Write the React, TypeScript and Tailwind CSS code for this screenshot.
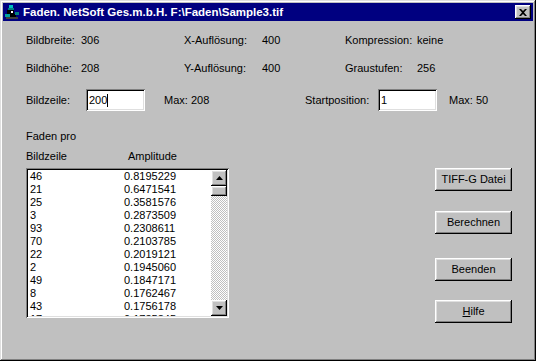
import React from "react";

const raised =
  "shadow-[inset_-1px_-1px_#000,inset_1px_1px_#fff,inset_-2px_-2px_#808080,inset_2px_2px_#dfdfdf]";
const sunken =
  "shadow-[inset_1px_1px_#808080,inset_-1px_-1px_#fff,inset_2px_2px_#000,inset_-2px_-2px_#dfdfdf]";

const rows: [string, string][] = [
  ["46", "0.8195229"],
  ["21", "0.6471541"],
  ["25", "0.3581576"],
  ["3", "0.2873509"],
  ["93", "0.2308611"],
  ["70", "0.2103785"],
  ["22", "0.2019121"],
  ["2", "0.1945060"],
  ["49", "0.1847171"],
  ["8", "0.1762467"],
  ["43", "0.1756178"],
  ["17", "0.1735845"],
];

function Btn({ children, className = "" }: { children: React.ReactNode; className?: string }) {
  return (
    <div
      className={`w-[77px] h-[23px] bg-[#c0c0c0] flex items-center justify-center ${raised} ${className}`}
    >
      {children}
    </div>
  );
}

function TitleIcon() {
  return (
    <svg width="16" height="16" viewBox="0 0 16 16" className="shrink-0">
      <rect x="5" y="1" width="4" height="3" fill="#00c0c0" />
      <rect x="4" y="4" width="6" height="2" fill="#008080" />
      <rect x="3" y="6" width="7" height="4" fill="#000" />
      <rect x="1" y="10" width="5" height="3" fill="#00a0a0" />
      <rect x="6" y="10" width="6" height="4" fill="#000" />
      <rect x="11" y="8" width="4" height="3" fill="#008080" />
      <rect x="2" y="13" width="12" height="2" fill="#404040" />
      <rect x="7" y="7" width="2" height="2" fill="#fff" />
    </svg>
  );
}

export default function App() {
  return (
    <div
      className={`w-[536px] h-[361px] bg-[#c0c0c0] p-[3px] flex flex-col text-[11px] leading-[13px] text-black font-['Liberation_Sans',Arial,sans-serif] shadow-[inset_-1px_-1px_#000,inset_1px_1px_#dfdfdf,inset_-2px_-2px_#808080,inset_2px_2px_#fff]`}
    >
      {/* Title bar */}
      <div className="h-[18px] bg-[#000080] flex items-center pl-[1px] pr-[2px] shrink-0">
        <TitleIcon />
        <span className="ml-[3px] text-white font-bold text-[11.5px] whitespace-nowrap">
          Faden. NetSoft Ges.m.b.H. F:\Faden\Sample3.tif
        </span>
        <div
          className={`ml-auto w-[16px] h-[14px] bg-[#c0c0c0] flex items-center justify-center ${raised}`}
        >
          <svg width="8" height="7" viewBox="0 0 8 7">
            <path d="M0 0h2l2 2 2-2h2L5 3.5 8 7H6L4 5 2 7H0l3-3.5z" fill="#000" />
          </svg>
        </div>
      </div>

      {/* Client */}
      <div className="flex flex-col pl-[23px]">
        <div className="flex mt-[13px] h-[13px] whitespace-nowrap">
          <span className="w-[55px]">Bildbreite:</span>
          <span className="w-[103px]">306</span>
          <span className="w-[78px]">X-Auflösung:</span>
          <span className="w-[83px]">400</span>
          <span className="w-[72px]">Kompression:</span>
          <span>keine</span>
        </div>
        <div className="flex mt-[15px] h-[13px] whitespace-nowrap">
          <span className="w-[55px]">Bildhöhe:</span>
          <span className="w-[103px]">208</span>
          <span className="w-[78px]">Y-Auflösung:</span>
          <span className="w-[83px]">400</span>
          <span className="w-[72px]">Graustufen:</span>
          <span>256</span>
        </div>
        <div className="flex items-center mt-[14px] h-[22px] whitespace-nowrap">
          <span className="w-[60px]">Bildzeile:</span>
          <div className={`w-[59px] h-[22px] bg-white flex items-center pl-[3px] ${sunken}`}>
            <span>200</span>
            <span className="w-[1px] h-[13px] bg-black" />
          </div>
          <span className="ml-[19px] w-[141px]">Max: 208</span>
          <span className="w-[73px]">Startposition:</span>
          <div className={`w-[59px] h-[22px] bg-white flex items-center pl-[3px] ${sunken}`}>
            <span>1</span>
          </div>
          <span className="ml-[12px]">Max: 50</span>
        </div>

        {/* Lower area */}
        <div className="flex mt-[19px]">
          <div className="flex flex-col w-[203px]">
            <span className="h-[13px]">Faden pro</span>
            <div className="flex mt-[7px] h-[13px]">
              <span className="w-[102px]">Bildzeile</span>
              <span>Amplitude</span>
            </div>
            <div className={`mt-[5px] h-[150px] bg-white p-[2px] flex ${sunken}`}>
              <div className="flex-1 overflow-hidden">
                {rows.map(([a, b]) => (
                  <div key={a} className="flex h-[13px] pl-[2px]">
                    <span className="w-[94px]">{a}</span>
                    <span>{b}</span>
                  </div>
                ))}
              </div>
              <div className="w-[16px] flex flex-col">
                <div className={`h-[16px] bg-[#c0c0c0] flex items-center justify-center ${raised}`}>
                  <svg width="7" height="4" viewBox="0 0 7 4">
                    <path d="M3.5 0L7 4H0z" fill="#000" />
                  </svg>
                </div>
                <div className={`h-[10px] bg-[#c0c0c0] ${raised}`} />
                <div className="flex-1 bg-[repeating-conic-gradient(#c0c0c0_0%_25%,#fff_0%_50%)] bg-[length:2px_2px]" />
                <div className={`h-[16px] bg-[#c0c0c0] flex items-center justify-center ${raised}`}>
                  <svg width="7" height="4" viewBox="0 0 7 4">
                    <path d="M0 0h7L3.5 4z" fill="#000" />
                  </svg>
                </div>
              </div>
            </div>
          </div>

          <div className="flex flex-col ml-[206px] pt-[38px]">
            <Btn>TIFF-G Datei</Btn>
            <Btn className="mt-[20px]">Berechnen</Btn>
            <Btn className="mt-[24px]">Beenden</Btn>
            <Btn className="mt-[19px]">
              <span>
                <span className="underline">H</span>ilfe
              </span>
            </Btn>
          </div>
        </div>
      </div>
    </div>
  );
}
